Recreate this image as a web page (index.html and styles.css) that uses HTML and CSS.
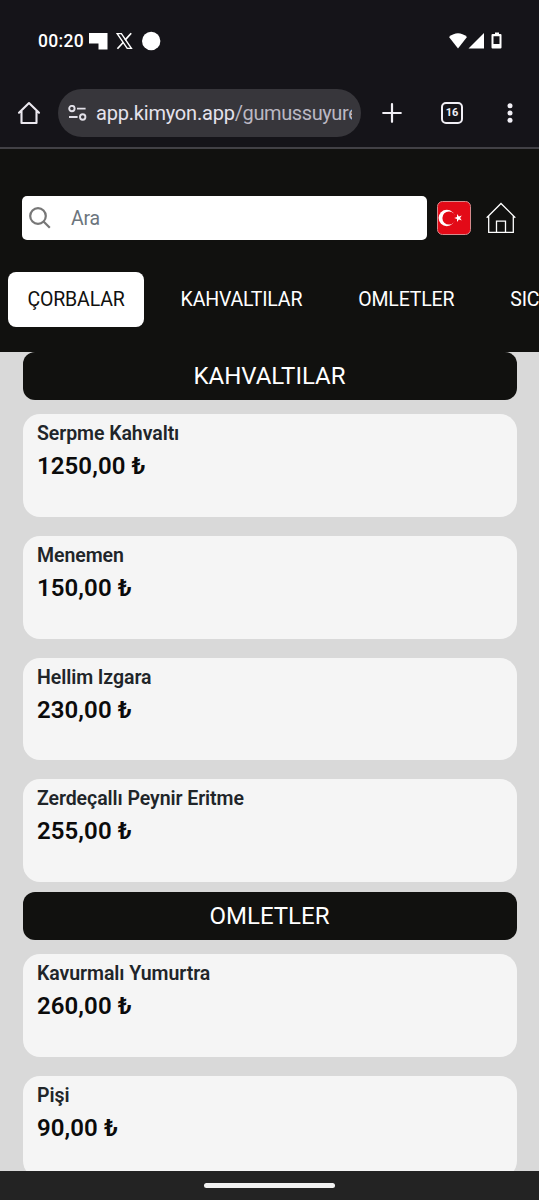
FILE: index.html
```html
<!DOCTYPE html>
<html lang="tr">
<head>
<meta charset="UTF-8">
<meta name="viewport" content="width=device-width, initial-scale=1.0">
<title>Menü</title>
<link rel="stylesheet" href="styles.css">
</head>
<body>

<div class="phone">
  <div class="status-bar">
    <span class="clock">00:20</span>
    <svg class="notifications" width="74" height="20" viewBox="0 0 74 20">
      <path d="M0 2h18.5v16.5h-9v-6H0z" fill="#fff"/>
      <path d="M28.2 2.6h4.200L42.400 17.4h-4.200z" fill="none" stroke="#fff" stroke-width="1.4"/>
      <path d="M42.200 2.200l-6.200 6.900M34.4 11.2l-6 6.600" stroke="#fff" stroke-width="1.700"/>
      <circle cx="62.2" cy="10" r="9.2" fill="#fff"/>
    </svg>
    <svg class="signals" width="54" height="18" viewBox="0 0 54 18">
      <path d="M0 5Q9-2.500 18 5L9 16.500z" fill="#fff"/>
      <path d="M35 1v15.500H19.500z" fill="#fff"/>
      <path fill-rule="evenodd" d="M46 .5h4v1.500h1.500q1 0 1 1V15.500q0 1-1 1h-8q-1 0-1-1V3q0-1 1-1H46zM44.500 4.200v7.800h6V4.200z" fill="#fff"/>
    </svg>
  </div>

  <div class="browser-bar">
    <svg class="browser-home" width="24" height="24" viewBox="0 0 24 24" fill="none" stroke="#ece9f0" stroke-width="2.1" stroke-linejoin="round" stroke-linecap="round">
      <path d="M2 11.700L12 2l10 9.700M4.500 10v12h15V10"/>
    </svg>
    <div class="address">
      <svg width="19" height="16" viewBox="0 0 19 16" fill="none" stroke="#e2e0e8" stroke-width="1.9">
        <circle cx="3.900" cy="3.600" r="2.700"/>
        <path d="M9 3.600h8.600M1 12h8.600"/>
        <circle cx="14.700" cy="12" r="2.700"/>
      </svg>
      <div class="url">app.kimyon.app<span class="url-path">/gumussuyure</span></div>
    </div>
    <svg class="new-tab" width="20" height="20" viewBox="0 0 20 20" stroke="#f1eff5" stroke-width="2.2" stroke-linecap="round">
      <path d="M1.200 10h17.600M10 1.200v17.600"/>
    </svg>
    <span class="tab-count">16</span>
    <svg class="more" width="6" height="20" viewBox="0 0 6 20" fill="#f1eff5">
      <circle cx="3" cy="2.700" r="2.500"/>
      <circle cx="3" cy="10" r="2.500"/>
      <circle cx="3" cy="17.300" r="2.500"/>
    </svg>
  </div>

  <header class="site-header">
    <div class="search-row">
      <div class="search">
        <svg width="22" height="22" viewBox="0 0 22 22" fill="none" stroke="#777" stroke-width="2.200">
          <circle cx="9" cy="9" r="7.800"/>
          <path d="M14.500 14.500l6.300 6.300"/>
        </svg>
        <span>Ara</span>
      </div>
      <svg class="flag" width="34" height="34" viewBox="0 0 34 34">
        <rect x=".5" y=".5" width="33" height="33" rx="5" fill="#e30a17" stroke="#d58a8c"/>
        <circle cx="9.800" cy="17" r="8.200" fill="#fff"/>
        <circle cx="12" cy="17" r="6.600" fill="#e30a17"/>
        <path d="M17.200 17l2.800-1v-3l1.900 2.400 2.900-.9-1.700 2.500 1.700 2.500-2.900-.9-1.900 2.400v-3z" fill="#fff"/>
      </svg>
      <svg class="house" width="30" height="32" viewBox="0 0 30 32" fill="none" stroke="#fff" stroke-width="1.300">
        <path d="M.7 15.700L15 1.500l14.300 14.200M2.700 14v16.300h24.600V14M10.500 30.300V19.200h9v11.100"/>
      </svg>
    </div>
    <nav class="tabs">
      <span class="tab active">ÇORBALAR</span>
      <span class="tab">KAHVALTILAR</span>
      <span class="tab">OMLETLER</span>
      <span class="tab">SICAK</span>
    </nav>
  </header>

  <main class="menu">
    <h2 class="category">KAHVALTILAR</h2>
    <div class="items">
      <div class="item">
        <div class="name">Serpme Kahvaltı</div>
        <div class="price">1250,00 ₺</div>
      </div>
      <div class="item">
        <div class="name">Menemen</div>
        <div class="price">150,00 ₺</div>
      </div>
      <div class="item">
        <div class="name">Hellim Izgara</div>
        <div class="price">230,00 ₺</div>
      </div>
      <div class="item">
        <div class="name">Zerdeçallı Peynir Eritme</div>
        <div class="price">255,00 ₺</div>
      </div>
    </div>
    <h2 class="category">OMLETLER</h2>
    <div class="items">
      <div class="item">
        <div class="name">Kavurmalı Yumurtra</div>
        <div class="price">260,00 ₺</div>
      </div>
      <div class="item">
        <div class="name">Pişi</div>
        <div class="price">90,00 ₺</div>
      </div>
    </div>
  </main>

  <div class="gesture-bar"><div class="handle"></div></div>
</div>

</body>
</html>
```
FILE: styles.css
```css
* {
  box-sizing: border-box;
}

body {
  margin: 0;
  font-family: Roboto, "Liberation Sans", sans-serif;
}

svg {
  display: block;
  flex: none;
}

.phone {
  display: flex;
  flex-direction: column;
  height: 1200px;
  overflow: hidden;
  background: #d9d9d9;
}

/* system status bar */
.status-bar {
  display: flex;
  align-items: center;
  flex: none;
  height: 80px;
  padding: 2px 36px 0 38px;
  background: #151419;
  color: #fff;
}

.clock {
  width: 51px;
  font-size: 17.5px;
  font-weight: 500;
  letter-spacing: 0.3px;
}

.signals {
  margin-left: auto;
}

/* browser toolbar */
.browser-bar {
  display: flex;
  align-items: center;
  flex: none;
  height: 69px;
  padding: 0 26px 1px 17px;
  border-bottom: 2px solid #424146;
  background: #151419;
}

.address {
  display: flex;
  align-items: center;
  gap: 9px;
  width: 303px;
  height: 48px;
  margin-left: 17px;
  padding: 0 9px 0 10px;
  border-radius: 24px;
  background: #37363b;
}

.url {
  flex: 1;
  overflow: hidden;
  white-space: nowrap;
  font-size: 20px;
  line-height: 28px;
  letter-spacing: -0.2px;
  color: #e5e2ec;
}

.url-path {
  letter-spacing: -0.4px;
  color: #bbb8c3;
}

.new-tab {
  margin-left: 21px;
}

.tab-count {
  width: 22px;
  height: 22px;
  margin-left: 39px;
  border: 2px solid #f1eff5;
  border-radius: 5px;
  text-align: center;
  font-size: 11px;
  font-weight: 700;
  line-height: 18px;
  color: #f1eff5;
}

.more {
  margin-left: auto;
}

/* restaurant header */
.site-header {
  flex: none;
  height: 203px;
  padding-top: 47px;
  background: #11110f;
}

.search-row {
  display: flex;
  align-items: center;
  padding-left: 22px;
}

.search {
  display: flex;
  align-items: center;
  gap: 20px;
  width: 405px;
  height: 44px;
  padding-left: 7px;
  border-radius: 5px;
  background: #fff;
  font-size: 19.5px;
  letter-spacing: -0.2px;
  color: #6c757d;
}

.flag {
  margin-left: 10px;
}

.house {
  margin-left: 15px;
}

.tabs {
  display: flex;
  gap: 17px;
  margin: 32px 0 0 8px;
  overflow: hidden;
}

.tab {
  flex: none;
  padding: 2px 19.5px 0;
  border-radius: 8px;
  font-size: 19.5px;
  line-height: 52.5px;
  letter-spacing: -0.17px;
  color: #fff;
}

.tab.active {
  background: #fff;
  color: #11110f;
}

/* menu list */
.menu {
  flex: 1;
  min-height: 0;
  padding: 0 22.5px;
  overflow: hidden;
}

.category {
  height: 48px;
  margin: 0;
  border-radius: 12px;
  background: #11110f;
  color: #fff;
  text-align: center;
  font-size: 24px;
  font-weight: 400;
  line-height: 48px;
}

.items {
  display: flex;
  flex-direction: column;
  gap: 19.2px;
  padding: 14.4px 0 9.9px;
}

.item {
  height: 102.5px;
  padding: 5px 14.5px;
  border-radius: 17px;
  background: #f5f5f5;
}

.name {
  font-size: 19.5px;
  font-weight: 600;
  line-height: 29px;
  letter-spacing: -0.07px;
  color: #212529;
}

.price {
  font-size: 24px;
  font-weight: 600;
  line-height: 36px;
  letter-spacing: 0.08px;
  color: #0b0b0b;
}

/* android navigation */
.gesture-bar {
  flex: none;
  height: 29px;
  padding-top: 12px;
  background: #232323;
}

.handle {
  width: 131px;
  height: 5px;
  margin: 0 auto;
  border-radius: 3px;
  background: #f2f2f2;
}
```
